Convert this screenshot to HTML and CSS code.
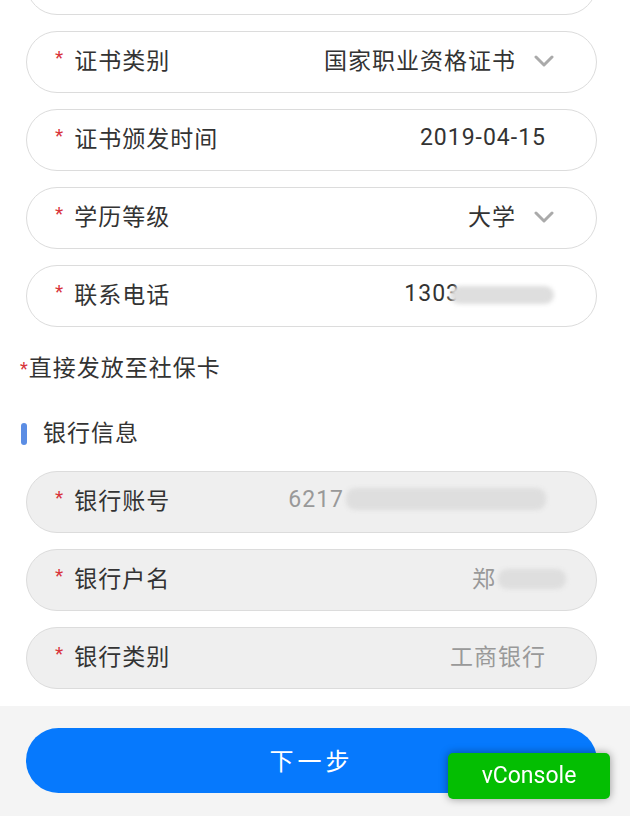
FILE: index.html
```
<!DOCTYPE html>
<html lang="zh-CN">
<head>
    <meta charset="UTF-8">
    <meta name="viewport" content="width=device-width, initial-scale=1.0">
    <title>证书信息</title>
    <link rel="stylesheet" href="styles.css">
</head>
<body>
    <div class="page">
        <div class="fields">
            <div class="field"></div>
            <div class="field has-arrow">
                <span class="star">*</span>
                <span class="label">证书类别</span>
                <span class="value">国家职业资格证书</span>
                <svg class="arrow" width="20" height="12" viewBox="0 0 20 12"><polyline points="2,2 10,10 18,2" fill="none" stroke="#aaa" stroke-width="3" stroke-linecap="round" stroke-linejoin="round"/></svg>
            </div>
            <div class="field">
                <span class="star">*</span>
                <span class="label">证书颁发时间</span>
                <span class="value">2019-04-15</span>
            </div>
            <div class="field has-arrow">
                <span class="star">*</span>
                <span class="label">学历等级</span>
                <span class="value">大学</span>
                <svg class="arrow" width="20" height="12" viewBox="0 0 20 12"><polyline points="2,2 10,10 18,2" fill="none" stroke="#aaa" stroke-width="3" stroke-linecap="round" stroke-linejoin="round"/></svg>
            </div>
            <div class="field">
                <span class="star">*</span>
                <span class="label">联系电话</span>
                <span class="value">1303<span class="mask mask-phone"></span></span>
            </div>
        </div>

        <p class="tip"><span class="tip-star">*</span>直接发放至社保卡</p>

        <h2 class="section-title"><span class="bar"></span>银行信息</h2>

        <div class="fields">
            <div class="field disabled">
                <span class="star">*</span>
                <span class="label">银行账号</span>
                <span class="value">6217<span class="mask mask-card"></span></span>
            </div>
            <div class="field disabled">
                <span class="star">*</span>
                <span class="label">银行户名</span>
                <span class="value">郑<span class="mask mask-name"></span></span>
            </div>
            <div class="field disabled">
                <span class="star">*</span>
                <span class="label">银行类别</span>
                <span class="value">工商银行</span>
            </div>
        </div>

        <div class="footer">
            <button class="next-btn">下一步</button>
        </div>
    </div>

    <div class="vconsole">vConsole</div>
</body>
</html>
```

FILE: styles.css
```
html, body {
    margin: 0;
    padding: 0;
    background-color: #fff;
    font-family: Roboto, "Noto Sans CJK SC", sans-serif;
    color: #333;
    overflow: hidden;
}
.page {
    margin-top: -47px;
}
.fields {
    display: flex;
    flex-direction: column;
    gap: 16px;
    padding: 0 33px 0 26px;
}
.field {
    display: flex;
    align-items: center;
    box-sizing: border-box;
    height: 62px;
    padding: 0 50px 6px 28px;
    border: 1.5px solid #dcdcdc;
    border-radius: 31px;
    background-color: #fff;
    font-size: 23px;
    letter-spacing: 1px;
}
.field.has-arrow {
    padding-right: 42px;
}
.field.disabled {
    background-color: #efefef;
}
.star {
    color: #d8343b;
    margin-right: 10px;
    margin-top: -4px;
    font-size: 19px;
}
.label {
    color: #333;
    white-space: nowrap;
}
.value {
    flex: 1;
    display: flex;
    justify-content: flex-end;
    align-items: center;
    color: #333;
    white-space: nowrap;
}
.disabled .value {
    color: #999;
}
.arrow {
    margin-left: 18px;
    margin-top: 4px;
}
.mask {
    display: inline-block;
    height: 18px;
    border-radius: 9px;
    background-color: #dedede;
    filter: blur(2px);
}
.mask-phone {
    width: 104px;
    margin-left: -10px;
    margin-right: -8px;
    margin-top: 4px;
}
.mask-card {
    width: 200px;
    margin-left: 2px;
    height: 22px;
}
.mask-name {
    width: 68px;
    height: 20px;
    margin-left: 2px;
    margin-right: -20px;
    margin-top: 4px;
}
.tip {
    margin: 27px 0 0 0;
    padding-left: 20px;
    line-height: 30px;
    font-size: 23px;
    letter-spacing: 1px;
    color: #333;
}
.tip-star {
    color: #d8343b;
    font-size: 18px;
    vertical-align: top;
}
.section-title {
    display: flex;
    align-items: center;
    margin: 35px 0 22px 0;
    padding-left: 21px;
    line-height: 30px;
    font-size: 23px;
    font-weight: normal;
    letter-spacing: 1px;
    color: #333;
}
.bar {
    width: 6px;
    height: 22px;
    border-radius: 3px;
    background-color: #5b8de4;
    margin-right: 16px;
}
.footer {
    margin-top: 17px;
    padding: 22px 33px 23px 26px;
    background-color: #f4f4f4;
}
.next-btn {
    display: block;
    width: 100%;
    height: 65px;
    padding-bottom: 4px;
    border: none;
    border-radius: 33px;
    background-color: #0679fd;
    color: #fff;
    font-family: "Noto Sans CJK SC", sans-serif;
    font-size: 24px;
    letter-spacing: 4px;
}
.vconsole {
    position: fixed;
    right: 20px;
    bottom: 17px;
    width: 162px;
    height: 46px;
    line-height: 46px;
    text-align: center;
    border-radius: 5px;
    background-color: #04be02;
    color: #fff;
    font-family: Roboto, sans-serif;
    font-size: 23px;
    box-shadow: 0 0 8px rgba(0, 0, 0, 0.4);
}
```
